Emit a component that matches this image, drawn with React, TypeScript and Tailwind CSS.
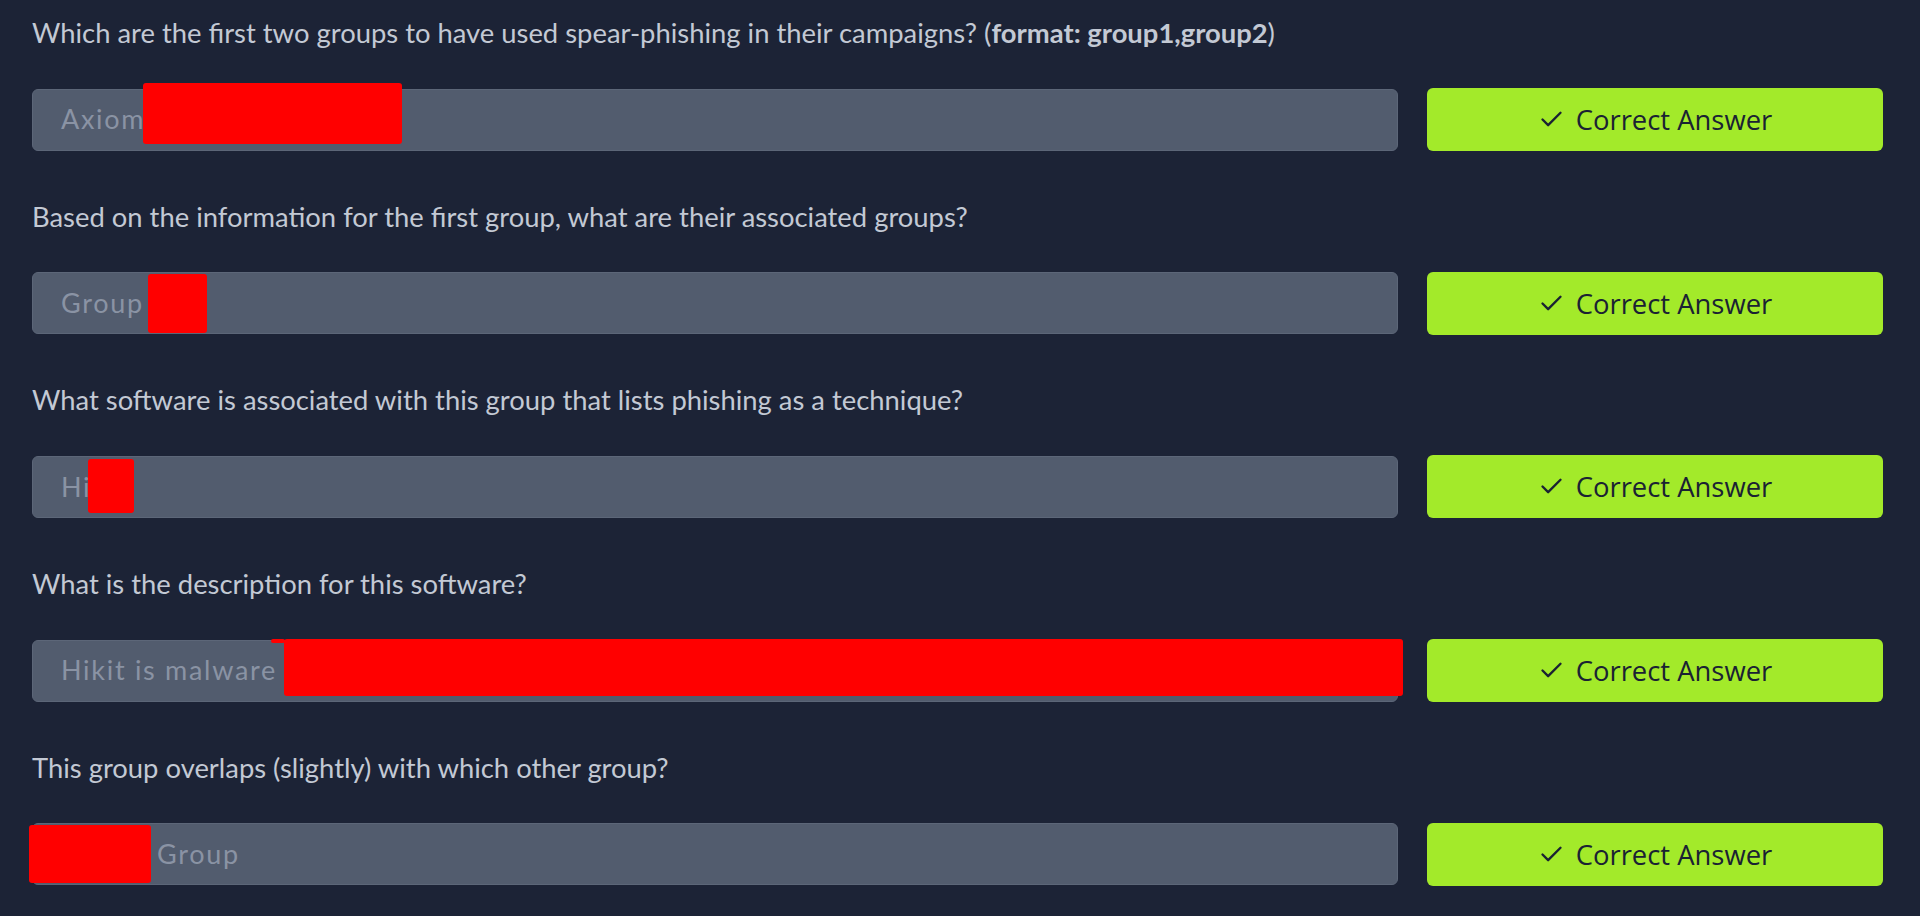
import React from 'react';
import { Check } from 'lucide-react';

type Question = {
  prompt: React.ReactNode;
  answer: string;
};

const questions: Question[] = [
  {
    prompt: (
      <>
        Which are the first two groups to have used spear-phishing in their campaigns? (
        <span className="font-bold">format: group1,group2</span>)
      </>
    ),
    answer: 'Axiom',
  },
  { prompt: 'Based on the information for the first group, what are their associated groups?', answer: 'Group' },
  { prompt: 'What software is associated with this group that lists phishing as a technique?', answer: 'Hi' },
  { prompt: 'What is the description for this software?', answer: 'Hikit is malware' },
  { prompt: 'This group overlaps (slightly) with which other group?', answer: '' },
];

const Redact = ({ className }: { className: string }) => (
  <div className={`absolute bg-[#ff0000] rounded-[3px] ${className}`} />
);

const App: React.FC = () => {
  return (
    <div className="min-h-screen w-full bg-[#1c2336] pl-8 pr-[37px] pt-[15px] font-['Lato',sans-serif]">
      {questions.map((q, i) => (
        <div key={i} className={i > 0 ? 'mt-[47.7px]' : ''}>
          <p className="text-[27.4px] leading-[36px] text-[#c3c9d4]">{q.prompt}</p>
          <div className="mt-[37px] flex items-center gap-[29px]">
            <div className="relative flex h-[62px] flex-1 items-center rounded-md border border-[#5c6678] bg-[#525c6e] pl-[28px]">
              <span className="text-[27px] tracking-[1.7px] text-[#8a93a4]">
                {i === 4 ? <span className="ml-[96px]">Group</span> : q.answer}
              </span>
              {i === 0 && <Redact className="left-[110px] top-[-7px] h-[61px] w-[259px]" />}
              {i === 1 && <Redact className="left-[115px] top-[1px] h-[59px] w-[59px]" />}
              {i === 2 && <Redact className="left-[55px] top-[2px] h-[54px] w-[46px]" />}
              {i === 3 && (
                <>
                  <Redact className="left-[238px] top-[-2px] h-[4px] w-[14px]" />
                  <Redact className="left-[251px] top-[-2px] h-[57px] w-[1119px]" />
                </>
              )}
              {i === 4 && <Redact className="left-[-4px] top-[1px] h-[58px] w-[122px]" />}
            </div>
            <button className="flex h-[63px] w-[456px] items-center justify-center gap-[11px] rounded-md bg-[#a3ea2a] font-['Open_Sans',sans-serif] text-[27.4px] text-[#1a2233]">
              <Check size={27} strokeWidth={2.1} />
              <span>Correct Answer</span>
            </button>
          </div>
        </div>
      ))}
    </div>
  );
};

export default App;
